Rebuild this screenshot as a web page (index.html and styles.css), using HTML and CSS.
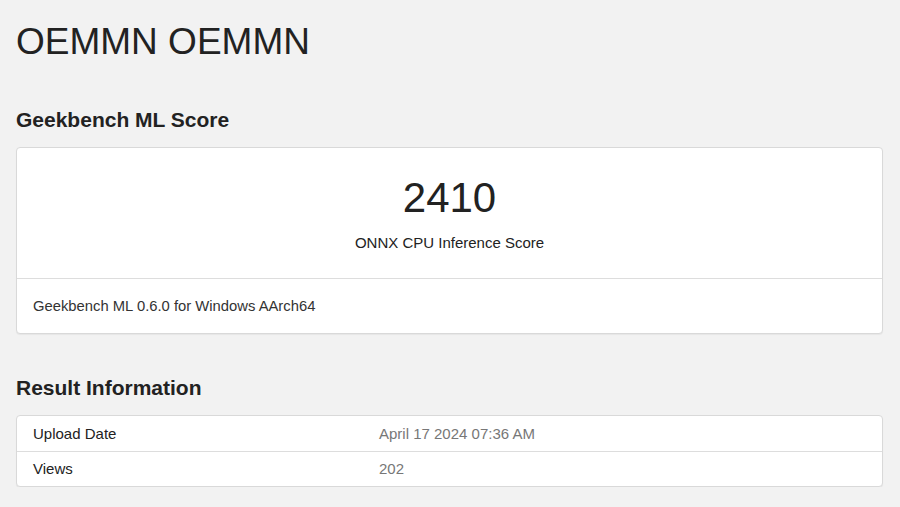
FILE: index.html
```html
<!DOCTYPE html>
<html lang="en">
<head>
    <meta charset="UTF-8">
    <meta name="viewport" content="width=device-width, initial-scale=1.0">
    <title>OEMMN OEMMN - Geekbench ML</title>
    <link rel="stylesheet" href="styles.css">
</head>
<body>
    <div class="container">
        <h1 class="device-name">OEMMN OEMMN</h1>

        <h2 class="section-title">Geekbench ML Score</h2>
        <div class="panel score-panel">
            <div class="score-body">
                <div class="score">2410</div>
                <div class="score-label">ONNX CPU Inference Score</div>
            </div>
            <div class="score-footer">Geekbench ML 0.6.0 for Windows AArch64</div>
        </div>

        <h2 class="section-title result-title">Result Information</h2>
        <div class="panel">
            <table class="info-table">
                <tr>
                    <td class="name">Upload Date</td>
                    <td class="value">April 17 2024 07:36 AM</td>
                </tr>
                <tr>
                    <td class="name">Views</td>
                    <td class="value">202</td>
                </tr>
            </table>
        </div>
    </div>
</body>
</html>
```

FILE: styles.css
```css
* {
    margin: 0;
    padding: 0;
    box-sizing: border-box;
    font-family: 'Liberation Sans', Arial, sans-serif;
}

body {
    background-color: #f2f2f2;
    color: #222;
}

.container {
    padding: 0 17px 0 16px;
}

.device-name {
    font-size: 37px;
    font-weight: normal;
    line-height: 44px;
    padding-top: 20px;
    color: #222;
}

.section-title {
    font-size: 21px;
    font-weight: bold;
    line-height: 26px;
    margin-top: 43px;
    margin-bottom: 14px;
    color: #222;
}

.result-title {
    margin-top: 41px;
}

.panel {
    background-color: #fff;
    border: 1px solid #d9d9d9;
    border-radius: 4px;
    box-shadow: 0 1px 1px rgba(0, 0, 0, 0.05);
    overflow: hidden;
}

.score-body {
    height: 131px;
    display: flex;
    flex-direction: column;
    align-items: center;
    padding-top: 24px;
    border-bottom: 1px solid #ddd;
}

.score {
    font-size: 42px;
    line-height: 52px;
    font-weight: 300;
    color: #222;
}

.score-label {
    font-size: 15px;
    margin-top: 10px;
    color: #222;
}

.score-footer {
    height: 54px;
    display: flex;
    align-items: center;
    padding-left: 16px;
    font-size: 14.8px;
    color: #333;
}

.info-table {
    width: 100%;
    border-collapse: collapse;
}

.info-table td {
    height: 35px;
    font-size: 15px;
    padding: 0 16px;
    vertical-align: middle;
}

.info-table tr + tr td {
    border-top: 1px solid #ddd;
}

.info-table .name {
    width: 346px;
    color: #222;
}

.info-table .value {
    color: #777;
}
```
